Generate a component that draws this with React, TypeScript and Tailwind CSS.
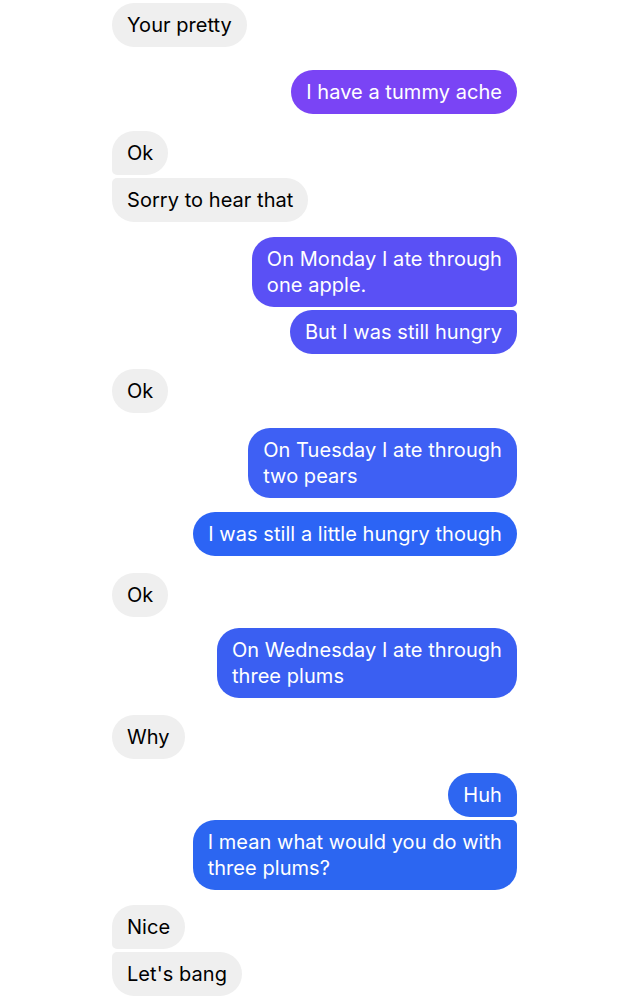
import React from "react";

type Msg = {
  lines: string[];
  mine: boolean;
  mt: string;
  color?: string;
  corners: string;
};

const MESSAGES: Msg[] = [
  { lines: ["Your pretty"], mine: false, mt: "mt-[3px]", corners: "rounded-[22px]" },
  { lines: ["I have a tummy ache"], mine: true, mt: "mt-[23px]", color: "bg-[#7a44f5]", corners: "rounded-[22px]" },
  { lines: ["Ok"], mine: false, mt: "mt-[17px]", corners: "rounded-[22px] rounded-bl-[5px]" },
  { lines: ["Sorry to hear that"], mine: false, mt: "mt-[3px]", corners: "rounded-[22px] rounded-tl-[5px]" },
  { lines: ["On Monday I ate through", "one apple."], mine: true, mt: "mt-[15px]", color: "bg-[#5a50f5]", corners: "rounded-[22px] rounded-br-[5px]" },
  { lines: ["But I was still hungry"], mine: true, mt: "mt-[3px]", color: "bg-[#5254f4]", corners: "rounded-[22px] rounded-tr-[5px]" },
  { lines: ["Ok"], mine: false, mt: "mt-[15px]", corners: "rounded-[22px]" },
  { lines: ["On Tuesday I ate through", "two pears"], mine: true, mt: "mt-[15px]", color: "bg-[#3e60f4]", corners: "rounded-[22px]" },
  { lines: ["I was still a little hungry though"], mine: true, mt: "mt-[14px]", color: "bg-[#2c64f5]", corners: "rounded-[22px]" },
  { lines: ["Ok"], mine: false, mt: "mt-[17px]", corners: "rounded-[22px]" },
  { lines: ["On Wednesday I ate through", "three plums"], mine: true, mt: "mt-[11px]", color: "bg-[#3a5ff2]", corners: "rounded-[22px]" },
  { lines: ["Why"], mine: false, mt: "mt-[17px]", corners: "rounded-[22px]" },
  { lines: ["Huh"], mine: true, mt: "mt-[14px]", color: "bg-[#2e66f1]", corners: "rounded-[22px] rounded-br-[5px]" },
  { lines: ["I mean what would you do with", "three plums?"], mine: true, mt: "mt-[3px]", color: "bg-[#2c66f1]", corners: "rounded-[22px] rounded-tr-[5px]" },
  { lines: ["Nice"], mine: false, mt: "mt-[15px]", corners: "rounded-[22px] rounded-bl-[5px]" },
  { lines: ["Let's bang"], mine: false, mt: "mt-[3px]", corners: "rounded-[22px] rounded-tl-[5px]" },
];

export default function App() {
  return (
    <div
      className="w-[640px] h-[1000px] bg-white overflow-hidden flex flex-col pl-[112px] pr-[123px]"
      style={{ fontFamily: "Inter, 'Noto Sans', sans-serif" }}
    >
      {MESSAGES.map((m, i) => (
        <div key={i} className={`flex ${m.mine ? "justify-end" : "justify-start"} ${m.mt}`}>
          <div
            className={`px-[15px] py-[9px] text-[20px] leading-[26px] whitespace-nowrap tracking-[0.05px] ${m.corners} ${
              m.mine ? `${m.color} text-white` : "bg-[#efefef] text-black"
            }`}
          >
            {m.lines.map((l, j) => (
              <div key={j}>{l}</div>
            ))}
          </div>
        </div>
      ))}
    </div>
  );
}
